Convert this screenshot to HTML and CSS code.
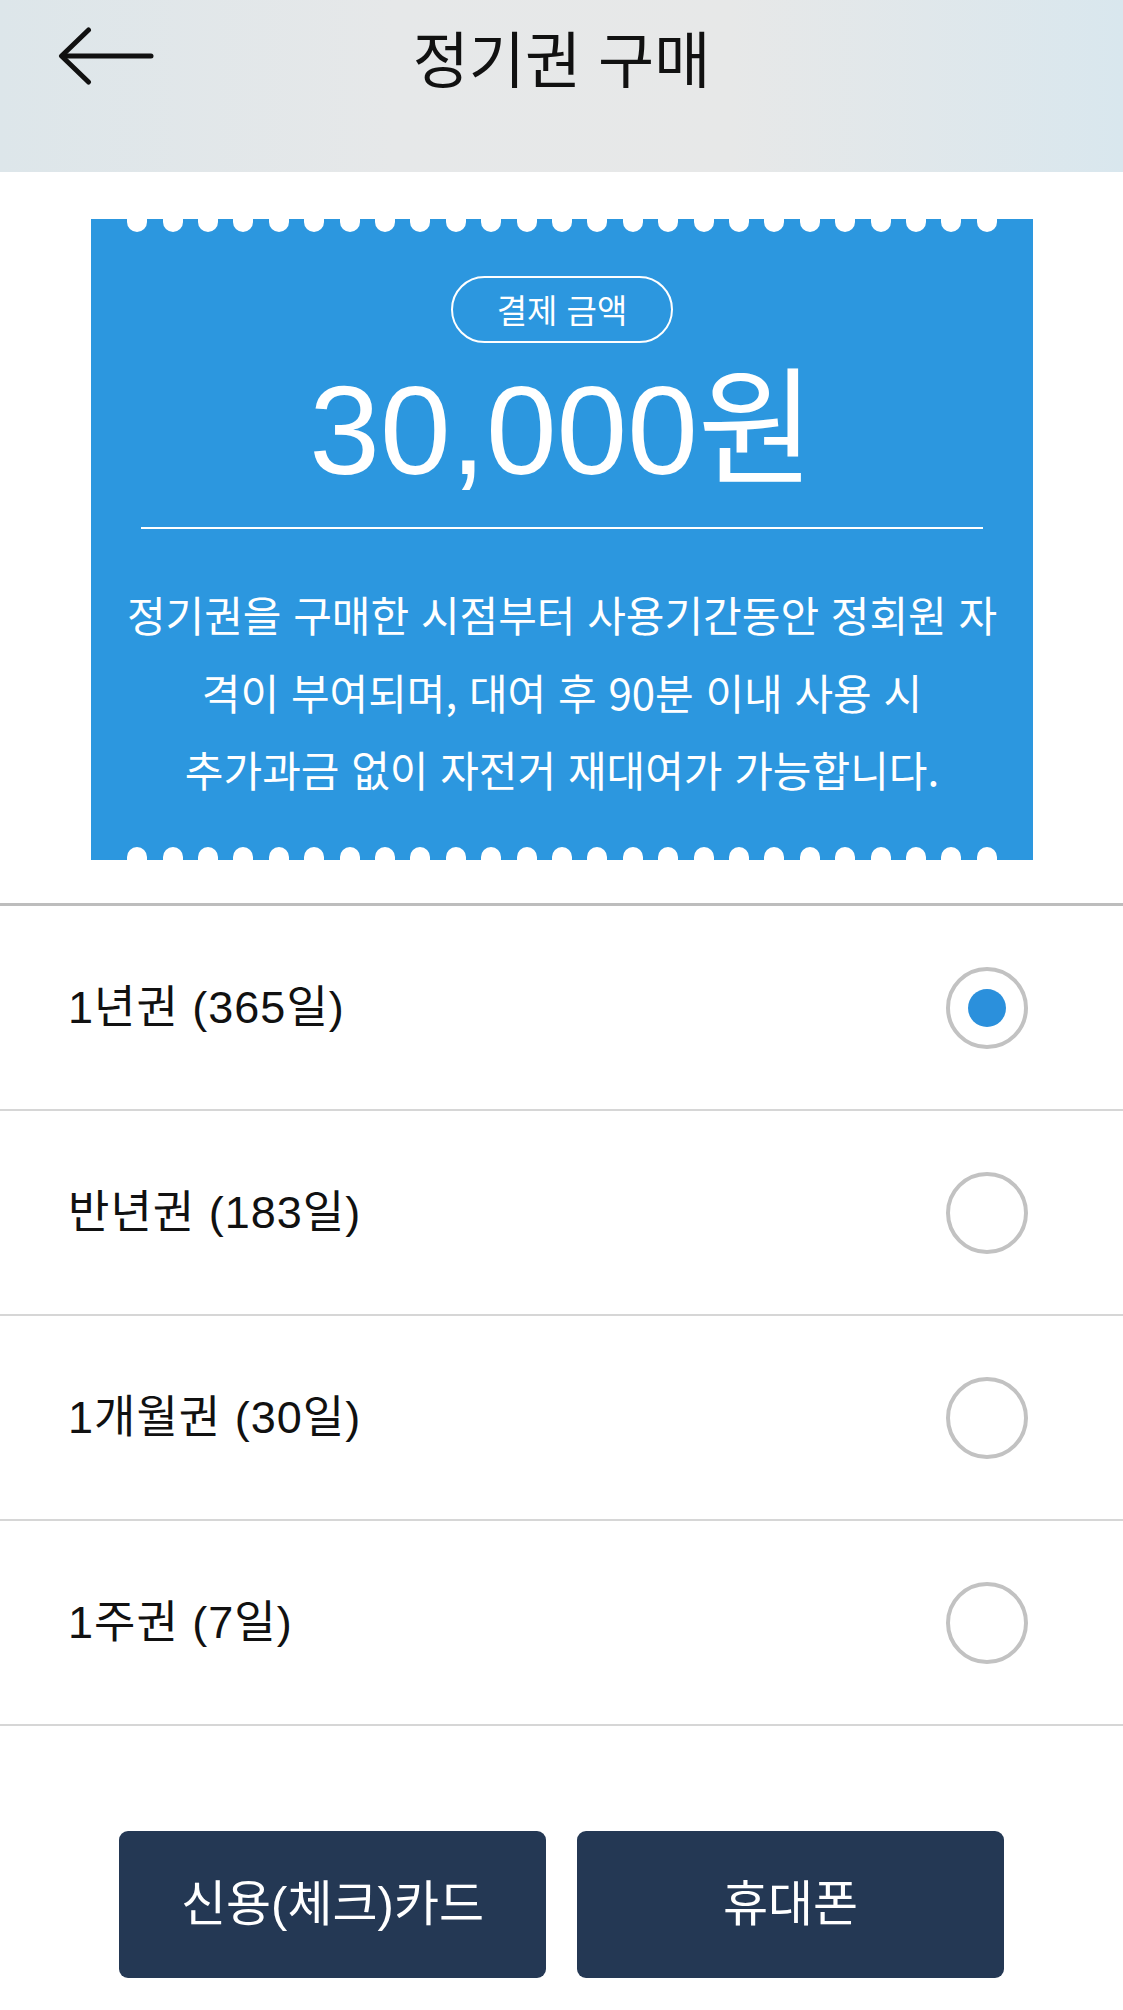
FILE: index.html
```html
<!DOCTYPE html>
<html lang="ko">
<head>
<meta charset="utf-8">
<title>정기권 구매</title>
<link rel="stylesheet" href="styles.css">
</head>
<body>
<header class="topbar">
  <button class="back" aria-label="뒤로">
    <svg width="96" height="58" viewBox="0 0 96 58" fill="none" stroke="#111" stroke-width="5" stroke-linecap="round" stroke-linejoin="round">
      <path d="M5 29 H93"/>
      <path d="M30.5 3 L3.5 29 L30.5 55"/>
    </svg>
  </button>
  <h1 class="title">정기권 구매</h1>
  <div class="spacer"></div>
</header>

<main class="content">
  <section class="ticket">
    <div class="scallops top">
      <span></span><span></span><span></span><span></span><span></span>
      <span></span><span></span><span></span><span></span><span></span>
      <span></span><span></span><span></span><span></span><span></span>
      <span></span><span></span><span></span><span></span><span></span>
      <span></span><span></span><span></span><span></span><span></span>
    </div>
    <div class="ticket-body">
      <div class="pill">결제 금액</div>
      <div class="amount">30,000원</div>
      <div class="rule"></div>
      <p class="desc">정기권을 구매한 시점부터 사용기간동안 정회원 자<br>격이 부여되며, 대여 후 90분 이내 사용 시<br>추가과금 없이 자전거 재대여가 가능합니다.</p>
    </div>
    <div class="scallops bottom">
      <span></span><span></span><span></span><span></span><span></span>
      <span></span><span></span><span></span><span></span><span></span>
      <span></span><span></span><span></span><span></span><span></span>
      <span></span><span></span><span></span><span></span><span></span>
      <span></span><span></span><span></span><span></span><span></span>
    </div>
  </section>

  <ul class="options">
    <li class="option"><span class="label">1년권 (365일)</span><span class="radio checked"></span></li>
    <li class="option"><span class="label">반년권 (183일)</span><span class="radio"></span></li>
    <li class="option"><span class="label">1개월권 (30일)</span><span class="radio"></span></li>
    <li class="option"><span class="label">1주권 (7일)</span><span class="radio"></span></li>
  </ul>

  <div class="actions">
    <button class="pay">신용(체크)카드</button>
    <button class="pay">휴대폰</button>
  </div>
</main>
</body>
</html>
```

FILE: styles.css
```css
* { box-sizing: border-box; }

html, body {
  margin: 0;
  padding: 0;
  background: #ffffff;
}

body {
  width: 1123px;
  min-height: 2010px;
  font-family: "Liberation Sans", "Noto Sans CJK KR", sans-serif;
  color: #111;
}

.topbar {
  height: 172px;
  display: grid;
  grid-template-columns: 1fr auto 1fr;
  grid-template-rows: 112px;
  align-items: center;
  background: linear-gradient(90deg, #dde6ea 0%, #e6e8e9 35%, #e7e8e8 65%, #d9e7ee 100%);
}

.back {
  justify-self: start;
  margin-left: 58px;
  padding: 0;
  border: 0;
  background: none;
  display: flex;
}

.title {
  margin: 0;
  font-family: "Noto Sans CJK KR", sans-serif;
  font-size: 61px;
  font-weight: 400;
  line-height: 1;
  color: #111;
}

.content {
  display: flex;
  flex-direction: column;
}

/* Ticket */
.ticket {
  margin: 47px 0 0 91px;
  width: 942px;
  height: 641px;
  background: #2c97df;
  display: flex;
  flex-direction: column;
  color: #fff;
}

.scallops {
  display: flex;
  justify-content: center;
  gap: 15.4px;
  height: 13px;
  flex: none;
}

.scallops span {
  width: 20px;
  height: 13px;
  background: #fff;
}

.scallops.top span {
  border-radius: 0 0 10px 10px;
}

.scallops.bottom span {
  border-radius: 10px 10px 0 0;
}

.ticket-body {
  flex: 1;
  display: flex;
  flex-direction: column;
  align-items: center;
  padding-top: 44px;
}

.pill {
  height: 67px;
  padding: 0 44px;
  border: 2px solid #fff;
  border-radius: 34px;
  display: flex;
  align-items: center;
  justify-content: center;
  font-family: "Noto Sans CJK KR", sans-serif;
  font-size: 33px;
  line-height: 1;
}

.amount {
  margin-top: 24px;
  font-size: 127px;
  line-height: 1;
  white-space: nowrap;
}

.rule {
  align-self: stretch;
  margin: 33px 50px 0;
  height: 2px;
  background: #fff;
}

.desc {
  margin: 46px 0 0;
  text-align: center;
  font-family: "Noto Sans CJK KR", sans-serif;
  font-size: 42px;
  line-height: 77.5px;
  white-space: nowrap;
}

/* Options */
.options {
  list-style: none;
  margin: 43px 0 0;
  padding: 0;
  border-top: 3px solid #bdbdbd;
}

.option {
  height: 205px;
  display: flex;
  align-items: center;
  justify-content: space-between;
  padding: 0 95px 0 68px;
  border-bottom: 2px solid #d6d6d6;
}

.label {
  font-size: 45px;
  letter-spacing: 1px;
  line-height: 1;
  color: #111;
}

.radio {
  width: 82px;
  height: 82px;
  border: 4px solid #c2c2c2;
  border-radius: 50%;
  display: flex;
  align-items: center;
  justify-content: center;
  flex: none;
}

.radio.checked::after {
  content: "";
  width: 38px;
  height: 38px;
  border-radius: 50%;
  background: #2b90dc;
}

/* Actions */
.actions {
  display: flex;
  justify-content: center;
  gap: 31px;
  margin-top: 105px;
}

.pay {
  width: 427px;
  height: 147px;
  border: 0;
  border-radius: 9px;
  background: #243854;
  color: #fff;
  font-family: "Liberation Sans", "Noto Sans CJK KR", sans-serif;
  font-size: 49px;
  line-height: 1;
  padding: 0;
}
```
